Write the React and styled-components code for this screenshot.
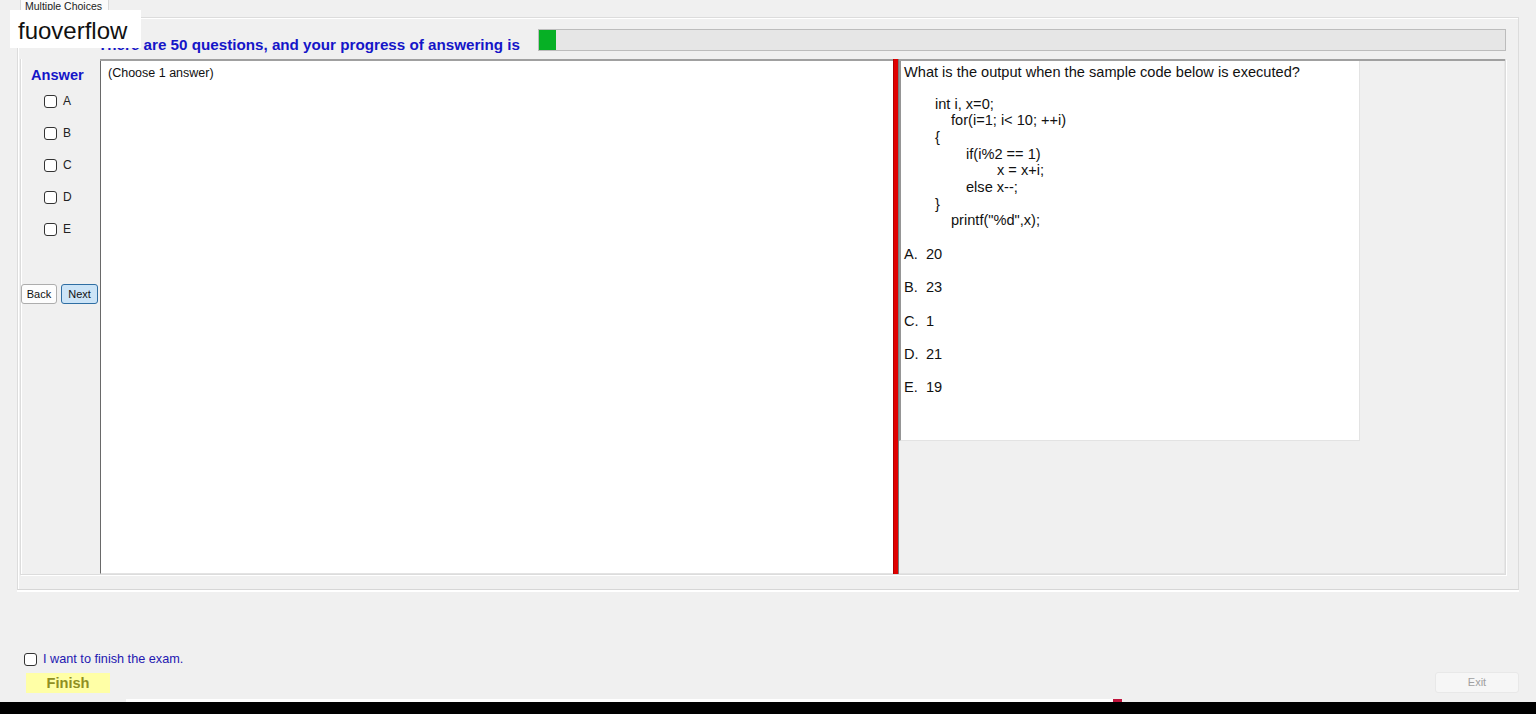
import React from 'react';
import styled, { createGlobalStyle } from 'styled-components';

const GlobalStyle = createGlobalStyle`
  html, body { margin: 0; padding: 0; background: #f0f0f0; }
  body { font-family: "Liberation Sans", Arial, sans-serif; overflow: hidden; }
  * { box-sizing: border-box; }
`;

const Window = styled.div`
  position: relative;
  width: 1536px;
  height: 714px;
  display: flex;
  flex-direction: column;
  background: #f0f0f0;
  color: #111;
`;

const Watermark = styled.div`
  position: absolute;
  left: 10px;
  top: 10px;
  width: 131px;
  height: 38px;
  background: #fff;
  padding-left: 8px;
  font-size: 24px;
  line-height: 42px;
  color: #111;
  z-index: 5;
`;

const TabStrip = styled.div`
  height: 17px;
  padding-left: 20px;
  display: flex;
  align-items: flex-start;
`;

const Tab = styled.div`
  position: relative;
  z-index: 1;
  height: 18px;
  margin-bottom: -1px;
  padding: 0 6px 0 4px;
  background: #fbfbfb;
  border-left: 1px solid #d9d9d9;
  border-right: 1px solid #d9d9d9;
  font-size: 10.5px;
  line-height: 12px;
  color: #222;
`;

const TabPage = styled.div`
  margin-left: 17px;
  width: 1502px;
  height: 573px;
  border: 1px solid #dcdcdc;
  border-bottom: 1px solid #d6d6d6;
  box-shadow: inset 1px 1px 0 #fff, 0 2px 0 #fff;
  display: flex;
  flex-direction: column;
`;

const Header = styled.div`
  height: 41px;
  display: flex;
  align-items: flex-end;
  padding: 0 12px 8px 80px;
`;

const Heading = styled.div`
  margin-bottom: -3px;
  font-size: 15.2px;
  font-weight: bold;
  line-height: 18px;
  color: #1515c8;
  white-space: nowrap;
`;

const Progress = styled.div`
  margin-left: auto;
  width: 968px;
  height: 22px;
  border: 1px solid #bcbcbc;
  background: #e6e6e6;
  display: flex;
`;

const ProgressFill = styled.div`
  height: 100%;
  background: #06b025;
`;

const GroupBox = styled.div`
  margin-left: 2px;
  width: 1486px;
  height: 516px;
  display: flex;
  border: 1px solid #dcdcdc;
  border-top: none;
  box-shadow: inset 1px 0 0 #fff, 1px 1px 0 #fff;
`;

const LeftColumn = styled.div`
  width: 79px;
  padding-top: 8px;
  display: flex;
  flex-direction: column;
`;

const AnswerTitle = styled.div`
  padding-left: 10px;
  font-size: 14.6px;
  font-weight: bold;
  line-height: 16px;
  color: #1515c8;
`;

const ChoiceList = styled.div`
  margin-top: 12px;
  padding-left: 23px;
  display: flex;
  flex-direction: column;
`;

const ChoiceRow = styled.label`
  height: 32px;
  display: flex;
  align-items: flex-start;
  gap: 6px;
  font-size: 12px;
  line-height: 13px;
  color: #222;
`;

const Box = styled.span`
  width: 13px;
  height: 13px;
  flex: none;
  border: 1px solid #333;
  border-radius: 3px;
  background: #fff;
`;

const NavButtons = styled.div`
  margin-top: 29px;
  display: flex;
  gap: 4px;
`;

const NavButton = styled.button`
  width: ${(p) => p.$w}px;
  height: 20px;
  padding: 0;
  font-family: inherit;
  font-size: 11px;
  color: #111;
  border-radius: 3px;
  border: 1px solid ${(p) => (p.$active ? '#2f6ea3' : '#adadad')};
  background: ${(p) => (p.$active ? '#cce4f7' : '#fdfdfd')};
`;

const SplitContainer = styled.div`
  flex: 1;
  display: flex;
  border-top: 2px solid #a0a0a0;
`;

const AnswerArea = styled.div`
  width: 793px;
  background: #fff;
  border-left: 1px solid #696969;
  border-bottom: 1px solid #e3e3e3;
  padding: 5px 7px;
  font-size: 12.5px;
  line-height: 15px;
  color: #111;
`;

const Splitter = styled.div`
  width: 6px;
  margin-top: -2px;
  background: #e00000;
  border-left: 1px solid #b00000;
  border-right: 1px solid #7a7a7a;
`;

const QuestionArea = styled.div`
  flex: 1;
  background: #f0f0f0;
  border-right: 1px solid #e6e6e6;
  border-bottom: 1px solid #e3e3e3;
`;

const QuestionPanel = styled.div`
  width: 461px;
  height: 380px;
  background: #fff;
  border-left: 2px solid #959595;
  border-right: 1px solid #e3e3e3;
  border-bottom: 1px solid #e3e3e3;
  padding: 2px 3px 0 3px;
  font-size: 14.6px;
  color: #111;
`;

const QuestionText = styled.div`
  line-height: 18px;
  white-space: nowrap;
`;

const CodeBlock = styled.div`
  margin-top: 14.6px;
  display: flex;
  flex-direction: column;
`;

const CodeLine = styled.div`
  line-height: 16.7px;
  height: 16.7px;
  padding-left: ${(p) => p.$indent}px;
  white-space: pre;
`;

const Options = styled.div`
  margin-top: 9px;
  display: flex;
  flex-direction: column;
`;

const Option = styled.div`
  display: flex;
  line-height: 33.3px;
  height: 33.3px;
`;

const OptionKey = styled.span`
  width: 22px;
`;

const Footer = styled.div`
  height: 108px;
  padding-top: 62px;
  display: flex;
  flex-direction: column;
`;

const FinishCheck = styled.label`
  height: 14px;
  padding-left: 24px;
  display: flex;
  align-items: center;
  gap: 6px;
  font-size: 12.7px;
  color: #2418b0;
`;

const ButtonRow = styled.div`
  margin-top: 6px;
  padding: 0 17px 0 26px;
  display: flex;
  justify-content: space-between;
  align-items: flex-end;
`;

const FinishButton = styled.button`
  width: 84px;
  height: 20px;
  padding: 0;
  margin-top: 1px;
  border: none;
  background: #ffffa6;
  font-family: inherit;
  font-size: 14.6px;
  font-weight: bold;
  color: #8f8f22;
`;

const ExitButton = styled.button`
  width: 84px;
  height: 21px;
  padding: 0 0 1px;
  border: 1px solid #e8e8e8;
  border-radius: 3px;
  background: #f6f6f6;
  font-family: inherit;
  font-size: 11px;
  color: #a0a0a0;
`;

const Strip = styled.div`
  height: 4px;
  display: flex;
  align-items: flex-end;
  padding-left: 126px;
`;

const StripBar = styled.div`
  width: ${(p) => p.$w}px;
  height: 3px;
  background: ${(p) => p.$c};
`;

const BlackBar = styled.div`
  height: 12px;
  background: #000;
`;

const choices = ['A', 'B', 'C', 'D', 'E'];

const code = [
  { t: 'int i, x=0;', i: 31 },
  { t: 'for(i=1; i< 10; ++i)', i: 47 },
  { t: '{', i: 31 },
  { t: 'if(i%2 == 1)', i: 62 },
  { t: 'x = x+i;', i: 93 },
  { t: 'else x--;', i: 62 },
  { t: '}', i: 31 },
  { t: 'printf("%d",x);', i: 47 },
];

const options = [
  ['A.', '20'],
  ['B.', '23'],
  ['C.', '1'],
  ['D.', '21'],
  ['E.', '19'],
];

export default function App() {
  return (
    <Window>
      <GlobalStyle />
      <Watermark>fuoverflow</Watermark>
      <TabStrip>
        <Tab>Multiple Choices</Tab>
      </TabStrip>
      <TabPage>
        <Header>
          <Heading>There are 50 questions, and your progress of answering is</Heading>
          <Progress>
            <ProgressFill style={{ width: `${(1 / 50) * 100 * 0.9}%` }} />
          </Progress>
        </Header>
        <GroupBox>
          <LeftColumn>
            <AnswerTitle>Answer</AnswerTitle>
            <ChoiceList>
              {choices.map((c) => (
                <ChoiceRow key={c}>
                  <Box />
                  {c}
                </ChoiceRow>
              ))}
            </ChoiceList>
            <NavButtons>
              <NavButton $w={36}>Back</NavButton>
              <NavButton $w={37} $active>
                Next
              </NavButton>
            </NavButtons>
          </LeftColumn>
          <SplitContainer>
            <AnswerArea>(Choose 1 answer)</AnswerArea>
            <Splitter />
            <QuestionArea>
              <QuestionPanel>
                <QuestionText>What is the output when the sample code below is executed?</QuestionText>
                <CodeBlock>
                  {code.map((l, k) => (
                    <CodeLine key={k} $indent={l.i}>
                      {l.t}
                    </CodeLine>
                  ))}
                </CodeBlock>
                <Options>
                  {options.map(([k, v]) => (
                    <Option key={k}>
                      <OptionKey>{k}</OptionKey>
                      {v}
                    </Option>
                  ))}
                </Options>
              </QuestionPanel>
            </QuestionArea>
          </SplitContainer>
        </GroupBox>
      </TabPage>
      <Footer>
        <FinishCheck>
          <Box />
          I want to finish the exam.
        </FinishCheck>
        <ButtonRow>
          <FinishButton>Finish</FinishButton>
          <ExitButton>Exit</ExitButton>
        </ButtonRow>
      </Footer>
      <Strip>
        <StripBar $w={987} $c="#ffffff" />
        <StripBar $w={9} $c="#c0143c" />
      </Strip>
      <BlackBar />
    </Window>
  );
}
